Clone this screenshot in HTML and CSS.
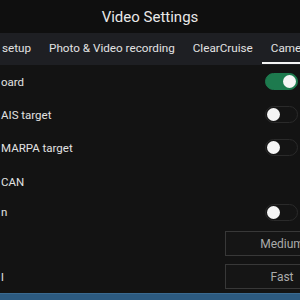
FILE: index.html
```html
<!DOCTYPE html>
<html>
<head>
<meta charset="utf-8">
<link rel="stylesheet" href="styles.css">
</head>
<body>
<div class="screen">
  <header class="header">Video Settings</header>
  <nav class="tabs">
    <div class="tab">setup</div>
    <div class="tab">Photo &amp; Video recording</div>
    <div class="tab">ClearCruise</div>
    <div class="tab active">Camera</div>
  </nav>
  <main class="content">
    <div class="row"><span class="label">oard</span><span class="toggle on"><span class="knob"></span></span></div>
    <div class="row"><span class="label">AIS target</span><span class="toggle"><span class="knob"></span></span></div>
    <div class="row"><span class="label">MARPA target</span><span class="toggle"><span class="knob"></span></span></div>
    <div class="row section"><span class="label">CAN</span></div>
    <div class="row short"><span class="label">n</span><span class="toggle"><span class="knob"></span></span></div>
    <div class="row"><span class="label"></span><span class="btn">Medium</span></div>
    <div class="row"><span class="label">l</span><span class="btn">Fast</span></div>
  </main>
  <footer class="bottom"></footer>
</div>
</body>
</html>
```
FILE: styles.css
```css
html, body {
  margin: 0;
  padding: 0;
  background: #131313;
}
.screen {
  width: 300px;
  height: 300px;
  overflow: hidden;
  display: flex;
  flex-direction: column;
  font-family: Roboto, "Noto Sans", sans-serif;
  color: #e4e4e4;
  background: #131313;
}
.header {
  height: 33px;
  flex: none;
  display: flex;
  align-items: center;
  justify-content: center;
  background: #0f0f0f;
  font-size: 15px;
  color: #e8e8e8;
}
.tabs {
  height: 32px;
  flex: none;
  display: flex;
  background: #1e1f23;
  margin-left: -7px;
  white-space: nowrap;
}
.tab {
  padding: 0 9px;
  line-height: 31px;
  font-size: 11.7px;
  color: #e2e2e2;
  border-bottom: 1px solid transparent;
}
.tab.active {
  box-shadow: inset 0 -2px 0 #f4f4f4;
}
.content {
  flex: 1;
  display: flex;
  flex-direction: column;
}
.row {
  height: 33px;
  flex: none;
  display: flex;
  align-items: center;
  justify-content: space-between;
  padding: 0 2px 0 1px;
}
.row.section {
  align-items: flex-end;
  padding-bottom: 8px;
  box-sizing: border-box;
}
.row.short {
  height: 30px;
}
.label {
  font-size: 11.5px;
  color: #e2e2e2;
}
.toggle {
  width: 33px;
  height: 17px;
  border-radius: 9px;
  box-sizing: border-box;
  background: #141414;
  border: 1px solid #2a2a2a;
  display: flex;
  align-items: center;
  padding: 0 1px;
}
.toggle .knob {
  width: 13px;
  height: 13px;
  border-radius: 50%;
  background: #f5f5f5;
}
.toggle.on {
  background: #1d7a4e;
  border-color: #1d7a4e;
  justify-content: flex-end;
}
.btn {
  width: 114px;
  height: 25px;
  box-sizing: border-box;
  margin-right: -41px;
  border: 1px solid #383838;
  background: #151515;
  color: #aaaaaa;
  font-size: 12px;
  display: flex;
  align-items: center;
  justify-content: center;
}
.bottom {
  height: 7px;
  flex: none;
  background: #2c5a80;
  border-top: 1px solid #3a6a90;
}
```
